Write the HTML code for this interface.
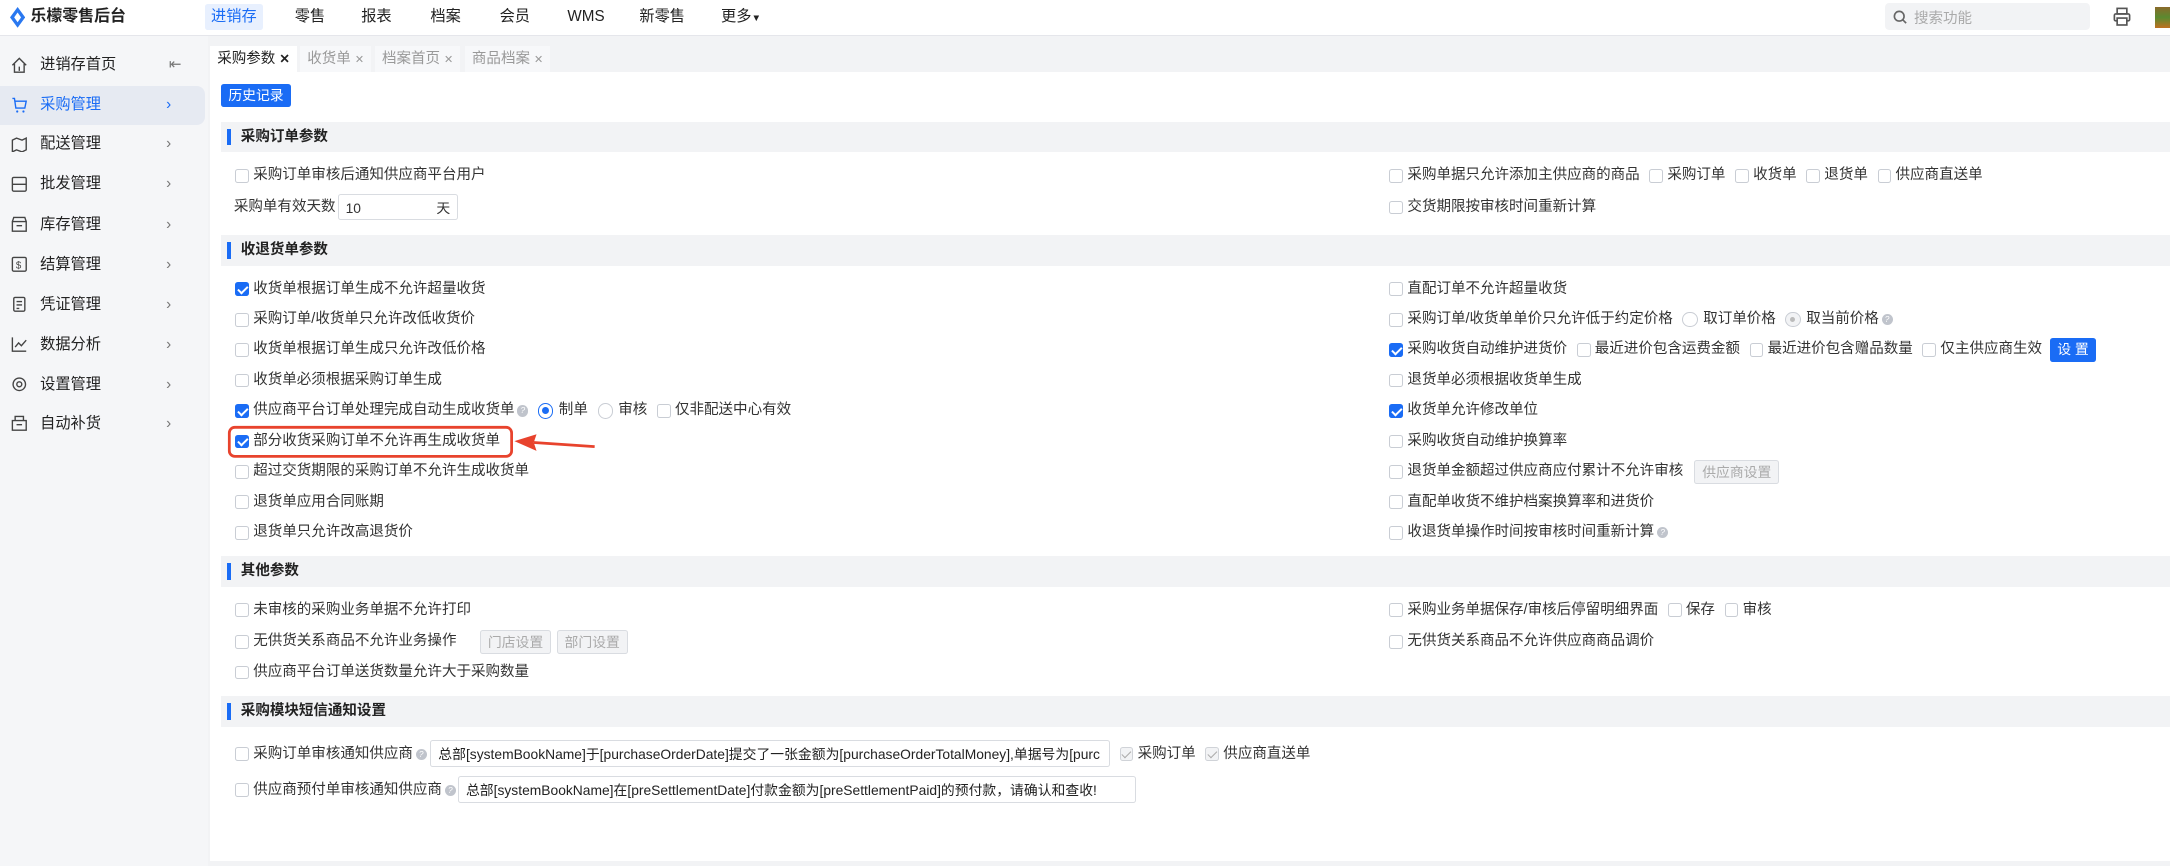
<!DOCTYPE html>
<html><head><meta charset="utf-8"><style>
html{zoom:1.38393}
body{margin:0;width:1568px;height:617px;overflow:hidden;position:relative;background:#fff;font-family:"Liberation Sans","Noto Sans CJK SC",sans-serif;font-size:11px;color:#333}
.a{position:absolute}
.hdr{left:0;top:0;width:1568px;height:25px;background:#fff;border-bottom:1px solid #e5e6eb}
.nav{top:3px;height:19px;line-height:19px;font-size:11px;color:#222}
.side{left:0;top:26px;width:150px;height:600px;background:#f5f6f8}
.si{left:0;width:146px;height:24px;line-height:24px;font-size:11px;color:#222}
.si span{position:absolute;left:29px}
.si i{position:absolute;left:120px;font-style:normal;color:#777;font-size:11px}
.si svg{position:absolute;left:8px;top:6px}
.main{left:150px;top:26px;width:1418px;height:600px;background:#f2f3f5}
.panel{left:152px;top:52px;width:1416px;height:570px;background:#fff}
.tab{top:33px;height:19px;line-height:19px;padding:0 5px;font-size:10.5px;color:#999;background:#f7f8fa}
.sec{left:160px;width:1408px;height:22px;background:#f2f3f5;font-weight:bold;font-size:10.5px;line-height:22px;color:#222}
.sec:before{content:"";position:absolute;left:4px;top:5px;width:3px;height:12px;background:#1a6cf5}
.sec span{position:absolute;left:14px}
.r{height:14px;line-height:14px;display:flex;align-items:center;white-space:nowrap;font-size:10.5px}
.cb{display:inline-block;width:10px;height:10px;border:1px solid #c9cdd4;border-radius:2px;margin-right:3px;box-sizing:border-box;position:relative;background:#fff;flex:none}
.cb.on{background:#1a6cf5;border-color:#1a6cf5}
.cb.on:after{content:"";position:absolute;left:2.5px;top:0.5px;width:3px;height:5.5px;border:solid #fff;border-width:0 1.5px 1.5px 0;transform:rotate(45deg)}
.cb.dis{background:#f2f3f5;border-color:#d0d3d8}
.cb.dis:after{content:"";position:absolute;left:2.5px;top:0.5px;width:3px;height:5.5px;border:solid #aaa;border-width:0 1.2px 1.2px 0;transform:rotate(45deg)}
.rd{display:inline-block;width:11px;height:11px;border:1px solid #c9cdd4;border-radius:50%;box-sizing:border-box;margin-right:4px;position:relative;flex:none}
.rd.on{border-color:#1a6cf5}
.rd.on:after{content:"";position:absolute;left:2px;top:2px;width:5px;height:5px;border-radius:50%;background:#1a6cf5}
.rd.dis{background:#f2f3f5}
.rd.dis:after{content:"";position:absolute;left:2.5px;top:2.5px;width:4px;height:4px;border-radius:50%;background:#bbb}
.g{margin-left:7px}
.q{display:inline-block;width:8px;height:8px;border-radius:50%;background:#c0c4cc;color:#fff;font-size:6px;line-height:8px;text-align:center;margin-left:2px}
.btn{display:inline-block;padding:0 5px;height:16px;line-height:16px;border-radius:2px;font-size:10px}
.inp{border:1px solid #d9dce1;border-radius:2px;height:19px;line-height:19px;padding:0 5px;box-sizing:border-box;overflow:hidden;white-space:nowrap;font-size:10px}
</style></head><body>
<div class="a hdr"></div>
<svg class="a" style="left:7px;top:5px" width="11" height="15" viewBox="0 0 11 15"><path d="M5.5 0 L11 7.5 L5.5 15 L0 7.5Z" fill="#2a78f0"/><path d="M5.5 4 L8 7.5 L5.5 11 L3 7.5Z" fill="#fff"/></svg>
<div class="a nav" style="left:22px;font-weight:bold;font-size:11.5px">乐檬零售后台</div>
<div class="a nav" style="left:148px;width:42px;text-align:center;background:#e8f0fe;color:#1a6cf5;border-radius:2px">进销存</div>
<div class="a nav" style="left:213px">零售</div>
<div class="a nav" style="left:261px">报表</div>
<div class="a nav" style="left:311px">档案</div>
<div class="a nav" style="left:361px">会员</div>
<div class="a nav" style="left:410px">WMS</div>
<div class="a nav" style="left:462px">新零售</div>
<div class="a nav" style="left:521px">更多<span style="font-size:7px">▼</span></div>
<div class="a" style="left:1362px;top:2px;width:148px;height:20px;background:#f2f3f5;border-radius:3px"></div>
<svg class="a" style="left:1368px;top:7px" width="10" height="10"><circle cx="4.5" cy="4.5" r="3.5" fill="none" stroke="#666" stroke-width="1.2"/><path d="M7 7l2.5 2.5" stroke="#666" stroke-width="1.2"/></svg>
<div class="a" style="left:1383px;top:5px;color:#aaa;font-size:10.5px">搜索功能</div>
<svg class="a" style="left:1527px;top:5px" width="13" height="14" viewBox="0 0 13 14"><rect x="3" y="1" width="7" height="4" fill="none" stroke="#555" stroke-width="1.2"/><rect x="1" y="5" width="11" height="5" rx="1" fill="none" stroke="#555" stroke-width="1.2"/><rect x="3" y="8" width="7" height="5" fill="#fff" stroke="#555" stroke-width="1.2"/></svg>
<div class="a" style="left:1557px;top:5px;width:11px;height:15px;background:linear-gradient(#8a6a2a,#5a8a30,#c07020)"></div>

<div class="a side"></div>
<div class="a si" style="top:35px"><svg width="12" height="12" viewBox="0 0 12 12"><path d="M1 6L6 1l5 5M2.5 5v6h7V5M6 7v3" fill="none" stroke="#444" stroke-width="1"/></svg><span>进销存首页</span><i style="left:122px">⇤</i></div>
<div class="a si" style="top:62px;height:28px;line-height:28px;width:148px;background:#e6eaf2;border-radius:0 6px 6px 0;color:#1a6cf5"><svg style="top:8px" width="12" height="12" viewBox="0 0 12 12"><path d="M1 1h1.5l1 7h6.5l1-5H3" fill="none" stroke="#1a6cf5" stroke-width="1"/><circle cx="4.5" cy="10.5" r=".8" fill="#1a6cf5"/><circle cx="9" cy="10.5" r=".8" fill="#1a6cf5"/></svg><span>采购管理</span><i style="color:#1a6cf5">›</i></div>
<div class="a si" style="top:92px"><svg width="12" height="12" viewBox="0 0 12 12"><path d="M1 3l3-1.5 4 1.5 3-1.5v8.5l-3 1.5-4-1.5-3 1.5z" fill="none" stroke="#444"/></svg><span>配送管理</span><i>›</i></div>
<div class="a si" style="top:121px"><svg width="12" height="12" viewBox="0 0 12 12"><rect x="1" y="1" width="10" height="10" rx="1" fill="none" stroke="#444"/><path d="M1 6h10" stroke="#444"/></svg><span>批发管理</span><i>›</i></div>
<div class="a si" style="top:150px"><svg width="12" height="12" viewBox="0 0 12 12"><path d="M1 4h10v7H1zM1 4l1-3h8l1 3M4 7h4" fill="none" stroke="#444"/></svg><span>库存管理</span><i>›</i></div>
<div class="a si" style="top:179px"><svg width="12" height="12" viewBox="0 0 12 12"><rect x="1" y="1" width="10" height="10" rx="1" fill="none" stroke="#444"/><text x="3.5" y="9" font-size="7" fill="#444">$</text></svg><span>结算管理</span><i>›</i></div>
<div class="a si" style="top:208px"><svg width="12" height="12" viewBox="0 0 12 12"><rect x="2" y="1" width="8" height="10" rx="1" fill="none" stroke="#444"/><path d="M4 4h4M4 6.5h4M4 9h2" stroke="#444"/></svg><span>凭证管理</span><i>›</i></div>
<div class="a si" style="top:237px"><svg width="12" height="12" viewBox="0 0 12 12"><path d="M1 1v10h10M3 8l2.5-3 2 2L11 3" fill="none" stroke="#444"/></svg><span>数据分析</span><i>›</i></div>
<div class="a si" style="top:266px"><svg width="12" height="12" viewBox="0 0 12 12"><circle cx="6" cy="6" r="4.5" fill="none" stroke="#444"/><circle cx="6" cy="6" r="1.8" fill="none" stroke="#444"/></svg><span>设置管理</span><i>›</i></div>
<div class="a si" style="top:294px"><svg width="12" height="12" viewBox="0 0 12 12"><path d="M1 4h10v7H1zM3 4V1h6v3M4 7h4" fill="none" stroke="#444"/></svg><span>自动补货</span><i>›</i></div>

<div class="a main"></div>
<div class="a tab" style="left:152px;background:#fff;color:#222">采购参数 <b style="font-size:9px">✕</b></div>
<div class="a tab" style="left:217px">收货单 <span style="font-size:8px">✕</span></div>
<div class="a tab" style="left:271px">档案首页 <span style="font-size:8px">✕</span></div>
<div class="a tab" style="left:336px">商品档案 <span style="font-size:8px">✕</span></div>
<div class="a panel"></div>
<div class="a btn" style="left:160px;top:61px;background:#1a6cf5;color:#fff">历史记录</div>

<div class="a sec" style="top:88px"><span>采购订单参数</span></div>
<div class="a r" style="left:170px;top:120px"><i class="cb"></i>采购订单审核后通知供应商平台用户</div>
<div class="a r" style="left:169px;top:143px">采购单有效天数</div>
<div class="a inp" style="left:244px;top:140px;width:87px">10<span style="float:right">天</span></div>
<div class="a r" style="left:1004px;top:120px"><i class="cb"></i>采购单据只允许添加主供应商的商品<i class="cb g"></i>采购订单<i class="cb g"></i>收货单<i class="cb g"></i>退货单<i class="cb g"></i>供应商直送单</div>
<div class="a r" style="left:1004px;top:143px"><i class="cb"></i>交货期限按审核时间重新计算</div>

<div class="a sec" style="top:170px"><span>收退货单参数</span></div>
<div class="a r" style="left:170px;top:202px"><i class="cb on"></i>收货单根据订单生成不允许超量收货</div>
<div class="a r" style="left:170px;top:224px"><i class="cb"></i>采购订单/收货单只允许改低收货价</div>
<div class="a r" style="left:170px;top:246px"><i class="cb"></i>收货单根据订单生成只允许改低价格</div>
<div class="a r" style="left:170px;top:268px"><i class="cb"></i>收货单必须根据采购订单生成</div>
<div class="a r" style="left:170px;top:290px"><i class="cb on"></i>供应商平台订单处理完成自动生成收货单<i class="q">?</i><i class="rd on g"></i>制单<i class="rd g"></i>审核<i class="cb g"></i>仅非配送中心有效</div>
<div class="a r" style="left:170px;top:312px"><i class="cb on"></i>部分收货采购订单不允许再生成收货单</div>
<div class="a r" style="left:170px;top:334px"><i class="cb"></i>超过交货期限的采购订单不允许生成收货单</div>
<div class="a r" style="left:170px;top:356px"><i class="cb"></i>退货单应用合同账期</div>
<div class="a r" style="left:170px;top:378px"><i class="cb"></i>退货单只允许改高退货价</div>
<div class="a r" style="left:1004px;top:202px"><i class="cb"></i>直配订单不允许超量收货</div>
<div class="a r" style="left:1004px;top:224px"><i class="cb"></i>采购订单/收货单单价只允许低于约定价格<i class="rd g"></i>取订单价格<i class="rd dis g"></i>取当前价格<i class="q">?</i></div>
<div class="a r" style="left:1004px;top:246px"><i class="cb on"></i>采购收货自动维护进货价<i class="cb g"></i>最近进价包含运费金额<i class="cb g"></i>最近进价包含赠品数量<i class="cb g"></i>仅主供应商生效<span class="btn" style="background:#1a6cf5;color:#fff;margin-left:6px;height:17px;line-height:17px">设 置</span></div>
<div class="a r" style="left:1004px;top:268px"><i class="cb"></i>退货单必须根据收货单生成</div>
<div class="a r" style="left:1004px;top:290px"><i class="cb on"></i>收货单允许修改单位</div>
<div class="a r" style="left:1004px;top:312px"><i class="cb"></i>采购收货自动维护换算率</div>
<div class="a r" style="left:1004px;top:334px"><i class="cb"></i>退货单金额超过供应商应付累计不允许审核<span class="btn" style="background:#f2f3f5;border:1px solid #d9dce1;color:#aaa;margin-left:8px">供应商设置</span></div>
<div class="a r" style="left:1004px;top:356px"><i class="cb"></i>直配单收货不维护档案换算率和进货价</div>
<div class="a r" style="left:1004px;top:378px"><i class="cb"></i>收退货单操作时间按审核时间重新计算<i class="q">?</i></div>

<svg class="a" style="left:160px;top:303px" width="280" height="35"><rect x="6" y="6" width="204" height="21" rx="4" fill="none" stroke="#e8432d" stroke-width="2"/><path d="M270 20 L226 17" stroke="#e8432d" stroke-width="2"/><path d="M212 16 L228 11 L226 17 L228 23Z" fill="#e8432d"/></svg>

<div class="a sec" style="top:402px"><span>其他参数</span></div>
<div class="a r" style="left:170px;top:434px"><i class="cb"></i>未审核的采购业务单据不允许打印</div>
<div class="a r" style="left:170px;top:457px"><i class="cb"></i>无供货关系商品不允许业务操作<span class="btn" style="background:#f2f3f5;border:1px solid #d9dce1;color:#aaa;margin-left:17px">门店设置</span><span class="btn" style="background:#f2f3f5;border:1px solid #d9dce1;color:#aaa;margin-left:4px">部门设置</span></div>
<div class="a r" style="left:170px;top:479px"><i class="cb"></i>供应商平台订单送货数量允许大于采购数量</div>
<div class="a r" style="left:1004px;top:434px"><i class="cb"></i>采购业务单据保存/审核后停留明细界面<i class="cb g"></i>保存<i class="cb g"></i>审核</div>
<div class="a r" style="left:1004px;top:457px"><i class="cb"></i>无供货关系商品不允许供应商商品调价</div>

<div class="a sec" style="top:503px"><span>采购模块短信通知设置</span></div>
<div class="a r" style="left:170px;top:538px"><i class="cb"></i>采购订单审核通知供应商<i class="q">?</i></div>
<div class="a inp" style="left:311px;top:535px;width:491px;color:#222">总部[systemBookName]于[purchaseOrderDate]提交了一张金额为[purchaseOrderTotalMoney],单据号为[purc</div>
<div class="a r" style="left:809px;top:538px"><i class="cb dis"></i>采购订单<i class="cb dis g"></i>供应商直送单</div>
<div class="a r" style="left:170px;top:564px"><i class="cb"></i>供应商预付单审核通知供应商<i class="q">?</i></div>
<div class="a inp" style="left:331px;top:561px;width:490px;color:#222">总部[systemBookName]在[preSettlementDate]付款金额为[preSettlementPaid]的预付款，请确认和查收!</div>
</body></html>
